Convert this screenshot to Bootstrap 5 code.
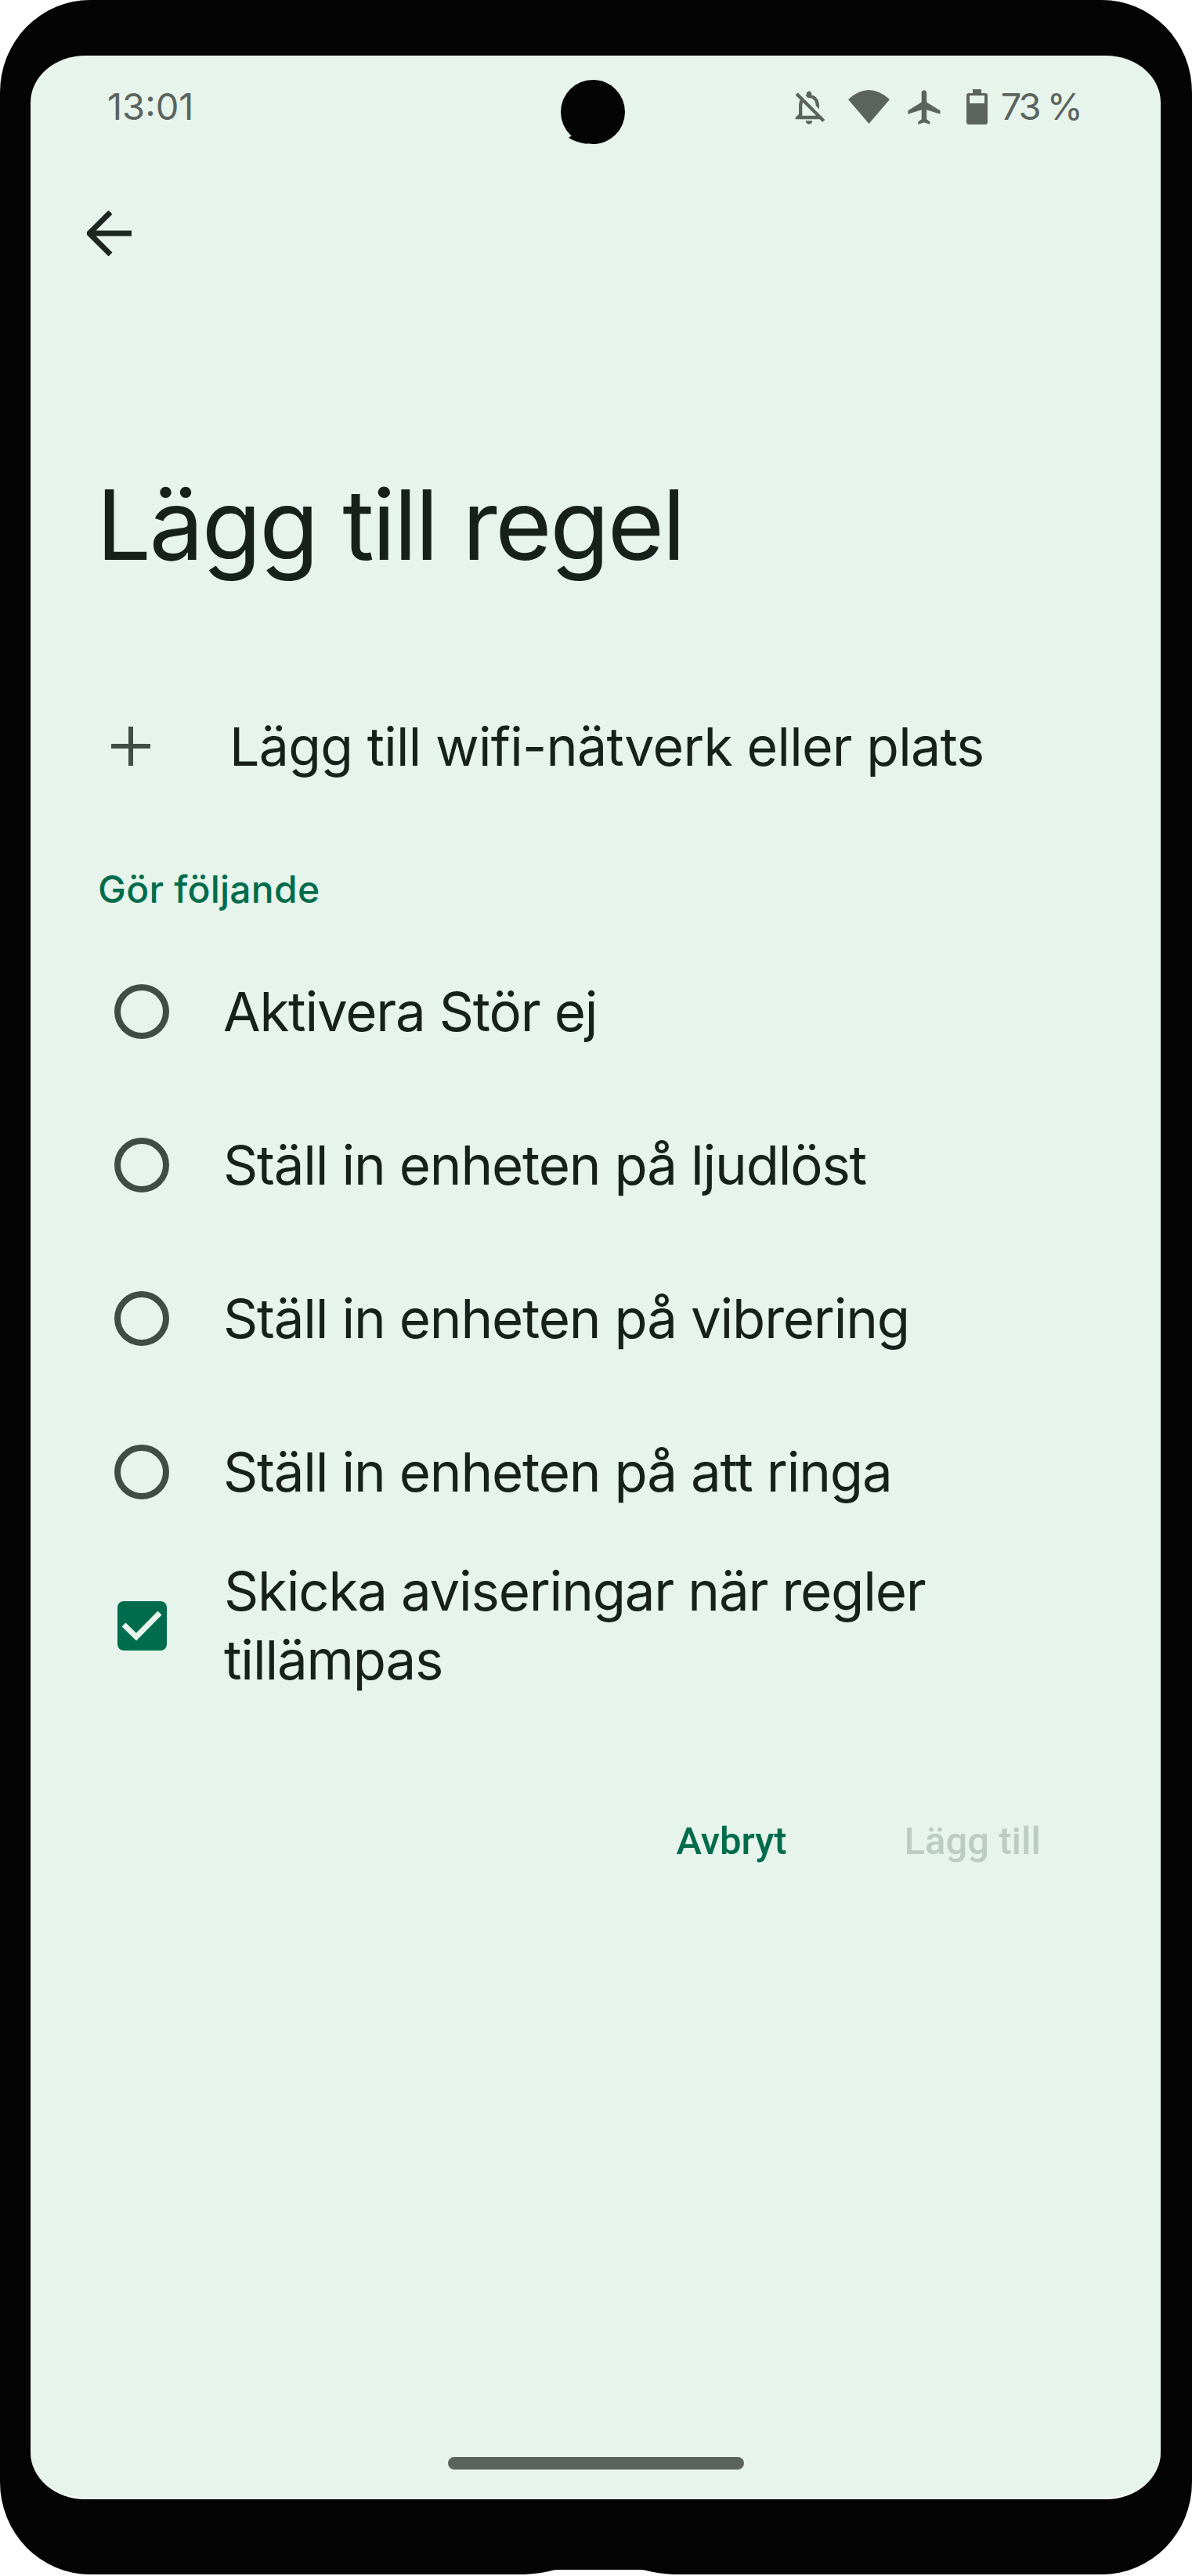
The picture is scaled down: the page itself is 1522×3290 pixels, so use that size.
<!DOCTYPE html>
<html lang="sv">
<head>
    <meta charset="UTF-8">
    <meta name="viewport" content="width=device-width, initial-scale=1.0">
    <title>Lägg till regel</title>
    <link href="https://cdn.jsdelivr.net/npm/bootstrap@5.3.0/dist/css/bootstrap.min.css" rel="stylesheet">
    <style>
        body {
            background: #fff;
            font-family: "Inter", "Liberation Sans", sans-serif;
        }
        .phone-frame {
            width: 1522px;
            height: 3288px;
            padding: 71px 40px 96px 39px;
            background: #040404;
            border-radius: 115px / 118px;
        }
        .phone-screen {
            background: #e6f4eb;
            border-radius: 70px / 60px;
            border-bottom: 2px solid #fff;
            color: #17201b;
        }
        .camera-hole {
            left: 716px;
            top: 102px;
        }
        .frame-notch {
            left: 670px;
            bottom: 0;
        }
        .status-row {
            height: 128px;
            padding: 3px 102px 0 98px;
            color: #5c635e;
            font-size: 47px;
        }
        .status-icons svg { fill: #5c635e; display: block; }
        .battery-text { letter-spacing: -3px; }
        .back-row {
            height: 198px;
            padding-left: 72px;
        }
        .page-title {
            margin: 203px 0 0 84px;
            font-size: 124px;
            line-height: 140px;
            font-weight: 400;
            letter-spacing: -2.5px;
        }
        .add-row {
            height: 196px;
            margin-top: 115px;
            padding-left: 103px;
            gap: 101px;
            font-size: 68px;
            letter-spacing: -.7px;
        }
        .group-label {
            margin: 55px 0 28px 86px;
            height: 60px;
            line-height: 60px;
            font-size: 48px;
            font-weight: 500;
            color: #006c4c;
            letter-spacing: .25px;
        }
        .option-row {
            min-height: 196px;
            padding: 0 100px 0 107px;
            gap: 69px;
            font-size: 69px;
            line-height: 88px;
            letter-spacing: -1.2px;
        }
        .option-row .form-check-input {
            flex: none;
            margin: 0;
            background-color: transparent;
        }
        .option-row .radio-ring {
            width: 70px;
            height: 70px;
            border: 8px solid #3f4d45;
        }
        .option-row .check-box {
            width: 63px;
            height: 63px;
            margin: 0 4px 0 4px;
            border: 0;
            border-radius: 8px;
            background-color: #006c4c;
            background-size: 63px 63px;
            background-image: url("data:image/svg+xml,%3csvg xmlns='http://www.w3.org/2000/svg' viewBox='0 0 63 63'%3e%3cpath fill='none' stroke='%23e6f4eb' stroke-width='7' d='M8 30l16 15.500 30-30.500'/%3e%3c/svg%3e");
        }
        .dialog-actions {
            height: 100px;
            margin-top: 128px;
            padding-right: 153px;
            gap: 150px;
            font-family: "Roboto", "Liberation Sans", sans-serif;
            font-size: 49px;
            font-weight: 500;
        }
        .action-cancel { color: #006c4c; }
        .action-add { color: #bdccc3; }
        .nav-pill {
            width: 378px;
            height: 16px;
            margin: auto auto 36px 533px;
            background: #5c635e;
        }
    </style>
</head>
<body class="m-0">
<div class="phone-frame position-relative">
    <div class="phone-screen h-100 d-flex flex-column overflow-hidden">
        <div class="status-row d-flex align-items-center justify-content-between">
            <span>13:01</span>
            <div class="status-icons d-flex align-items-center">
                <svg width="52" height="52" viewBox="0 0 24 24" style="margin-right:24px"><path d="M12 22c1.100 0 2-.9 2-2h-4c0 1.100.9 2 2 2zm0-15.500c2.490 0 4 2.020 4 4.500v.1l2 2V11c0-3.070-1.630-5.640-4.500-6.320V4c0-.83-.67-1.500-1.500-1.500s-1.500.67-1.500 1.500v.68c-.24.06-.47.15-.69.23l1.640 1.640c.18-.02.36-.05.55-.05zM5.410 3.350L4 4.760l2.810 2.810C6.290 8.570 6 9.740 6 11v5l-2 2v1h14.240l1.740 1.740 1.410-1.410L5.410 3.350zM16 17H8v-6c0-.68.12-1.320.34-1.900L16 16.760V17z"/></svg>
                <svg width="53" height="43" viewBox="0 0 53 43" style="margin-right:19px"><path d="M0 12Q26.500-12 53 12L26.500 43z"/></svg>
                <svg width="52" height="52" viewBox="0 0 24 24" style="margin-right:27px"><path d="M21 16v-2l-8-5V3.500c0-.83-.67-1.500-1.500-1.500S10 2.670 10 3.500V9l-8 5v2l8-2.500V19l-2 1.500V22l3.500-1 3.500 1v-1.500L13 19v-5.500l8 2.500z"/></svg>
                <svg width="27" height="45" viewBox="0 0 27 45" style="margin-right:17px"><path fill-rule="evenodd" d="M8 0h11v5h5q3 0 3 3v34q0 3-3 3H3q-3 0-3-3V8q0-3 3-3h5zM4 8v10h19V8z"/></svg>
                <span class="battery-text">73 %</span>
            </div>
        </div>
        <div class="back-row d-flex align-items-center">
            <svg width="58" height="58" viewBox="0 0 58 58"><path fill="none" stroke="#1f2622" stroke-width="7" d="M57 29H4M30 2L3 29l27 27"/></svg>
        </div>
        <h1 class="page-title">Lägg till regel</h1>
        <div class="add-row d-flex align-items-center">
            <svg class="flex-shrink-0" width="50" height="50" viewBox="0 0 50 50"><path fill="none" stroke="#3f4d45" stroke-width="6" d="M25 0v50M0 25h50"/></svg>
            <span>Lägg till wifi-nätverk eller plats</span>
        </div>
        <div class="group-label">Gör följande</div>
        <div class="option-row d-flex align-items-center"><input class="form-check-input radio-ring" type="radio" name="atgard"><span>Aktivera Stör ej</span></div>
        <div class="option-row d-flex align-items-center"><input class="form-check-input radio-ring" type="radio" name="atgard"><span>Ställ in enheten på ljudlöst</span></div>
        <div class="option-row d-flex align-items-center"><input class="form-check-input radio-ring" type="radio" name="atgard"><span>Ställ in enheten på vibrering</span></div>
        <div class="option-row d-flex align-items-center"><input class="form-check-input radio-ring" type="radio" name="atgard"><span>Ställ in enheten på att ringa</span></div>
        <div class="option-row d-flex align-items-center"><input class="form-check-input check-box" type="checkbox" checked><span>Skicka aviseringar när regler tillämpas</span></div>
        <div class="dialog-actions d-flex align-items-center justify-content-end">
            <span class="action-cancel">Avbryt</span>
            <span class="action-add">Lägg till</span>
        </div>
        <div class="nav-pill rounded-pill"></div>
    </div>
    <svg class="camera-hole position-absolute" width="82" height="82" viewBox="0 0 82 82"><circle cx="41" cy="41" r="41" fill="#040404"/><path fill="#040404" d="M10 74Q20 80 34 82L18 68z"/></svg>
    <svg class="frame-notch position-absolute" width="190" height="6" viewBox="0 0 190 6"><path fill="#fff" d="M0 6Q20 5 35 1Q38 0 45 0H145Q152 0 155 1Q170 5 190 6z"/></svg>
</div>
<script src="https://cdn.jsdelivr.net/npm/bootstrap@5.3.0/dist/js/bootstrap.bundle.min.js"></script>
</body>
</html>
